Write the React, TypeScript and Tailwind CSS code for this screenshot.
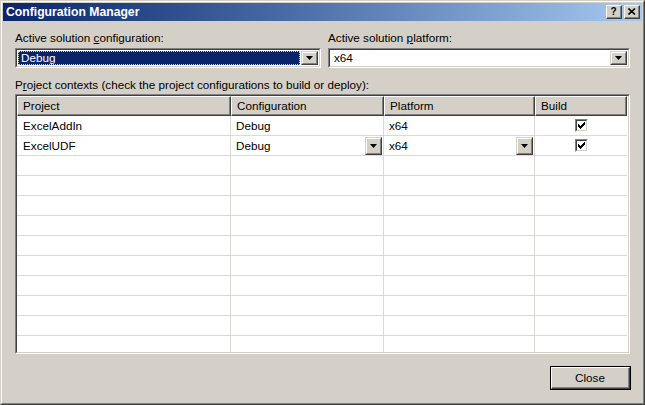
import React from "react";

const font = { fontFamily: '"Liberation Sans", Arial, sans-serif' };

function Arrow() {
  return (
    <svg width="7" height="4" viewBox="0 0 7 4" className="block">
      <path d="M0 0h7L3.5 4z" fill="#000" />
    </svg>
  );
}

function DropBtn({ className = "" }: { className?: string }) {
  return (
    <div className={`flex items-center justify-center bg-[#d4d0c8] border border-t-[#d4d0c8] border-l-[#d4d0c8] border-r-[#404040] border-b-[#404040] ${className}`}>
      <div className="flex-1 self-stretch flex items-center justify-center border border-t-white border-l-white border-r-[#808080] border-b-[#808080]">
        <Arrow />
      </div>
    </div>
  );
}

function Sunken({ children, className = "" }: { children: React.ReactNode; className?: string }) {
  return (
    <div className={`border border-t-[#808080] border-l-[#808080] border-r-white border-b-white ${className}`}>
      <div className="h-full border border-t-[#404040] border-l-[#404040] border-r-[#d4d0c8] border-b-[#d4d0c8] bg-white">
        {children}
      </div>
    </div>
  );
}

function Check() {
  return (
    <div className="w-[13px] h-[13px] border border-t-[#808080] border-l-[#808080] border-r-white border-b-white">
      <div className="w-full h-full border border-t-[#404040] border-l-[#404040] border-r-[#d4d0c8] border-b-[#d4d0c8] bg-white flex items-center justify-center">
        <svg width="7" height="7" viewBox="0 0 7 7" className="block">
          <path d="M0 2h1v1h1v1h1V3h1V2h1V1h1V0h1v3H6v1H5v1H4v1H3v1H2V6H1V5H0z" fill="#000" />
        </svg>
      </div>
    </div>
  );
}

function TitleBtn({ children }: { children: React.ReactNode }) {
  return (
    <div className="w-[16px] h-[14px] bg-[#d4d0c8] border border-t-white border-l-white border-r-[#404040] border-b-[#404040]">
      <div className="w-full h-full border-r border-b border-r-[#808080] border-b-[#808080] flex items-center justify-center">
        {children}
      </div>
    </div>
  );
}

const cols = [214, 153, 151, 92];

function HeaderCell({ text, w }: { text: string; w: number }) {
  return (
    <div style={{ width: w }} className="h-[20px] shrink-0 bg-[#d4d0c8] border border-t-white border-l-white border-r-[#404040] border-b-[#404040]">
      <div className="h-full border-r border-b border-r-[#808080] border-b-[#808080] pl-[5px] flex items-center text-[11.7px] text-black">
        {text}
      </div>
    </div>
  );
}

function Cell({ w, children, last = false }: { w: number; children?: React.ReactNode; last?: boolean }) {
  return (
    <div style={{ width: w }} className={`h-[20px] shrink-0 border-b border-b-[#dcd9d2] ${last ? "" : "border-r border-r-[#dcd9d2]"} flex items-center text-[11.7px] text-black`}>
      {children}
    </div>
  );
}

export default function App() {
  const empty = Array.from({ length: 10 });
  return (
    <div style={font} className="w-[645px] h-[405px] bg-[#d4d0c8] border border-t-[#d4d0c8] border-l-[#d4d0c8] border-r-[#404040] border-b-[#404040] overflow-hidden">
      <div className="h-full border border-t-white border-l-white border-r-[#808080] border-b-[#808080] p-[1px] flex flex-col">
        {/* Title bar */}
        <div className="h-[18px] shrink-0 bg-gradient-to-r from-[#0a246a] to-[#a6caf0] flex items-center pl-[3px] pr-[2px]">
          <span className="text-white font-bold text-[12.2px]">Configuration Manager</span>
          <div className="ml-auto flex items-center">
            <TitleBtn>
              <span className="text-[10px] font-bold leading-none text-black">?</span>
            </TitleBtn>
            <div className="w-[2px]" />
            <TitleBtn>
              <svg width="8" height="7" viewBox="0 0 8 7" className="block">
                <path d="M0.5 0.5L7 6.5M7 0.5L0.5 6.5" stroke="#000" strokeWidth="1.6" />
              </svg>
            </TitleBtn>
          </div>
        </div>

        {/* Body */}
        <div className="flex-1 flex flex-col px-[12px] pt-[10px] text-[11.7px] text-black">
          <div className="flex gap-[7px]">
            <div className="w-[306px] flex flex-col">
              <div className="h-[14px] leading-[14px]">
                Active solution <span className="underline">c</span>onfiguration:
              </div>
              <Sunken className="mt-[3px] h-[20px]">
                <div className="h-full flex items-center p-[1px]">
                  <div className="flex-1 h-full bg-[#0a246a] text-white flex items-center pl-[2px] border border-dotted border-[#d4d0c8]">Debug</div>
                  <DropBtn className="w-[17px] h-full ml-[1px]" />
                </div>
              </Sunken>
            </div>
            <div className="flex-1 flex flex-col">
              <div className="h-[14px] leading-[14px]">
                Active solution <span className="underline">p</span>latform:
              </div>
              <Sunken className="mt-[3px] h-[20px]">
                <div className="h-full flex items-center p-[1px]">
                  <div className="flex-1 h-full flex items-center pl-[3px]">x64</div>
                  <DropBtn className="w-[17px] h-full" />
                </div>
              </Sunken>
            </div>
          </div>

          <div className="mt-[10px] h-[14px] leading-[14px]">
            P<span className="underline">r</span>oject contexts (check the project configurations to build or deploy):
          </div>

          <Sunken className="mt-[2px] h-[260px]">
            <div className="h-full overflow-hidden flex flex-col">
              <div className="flex">
                <HeaderCell text="Project" w={cols[0]} />
                <HeaderCell text="Configuration" w={cols[1]} />
                <HeaderCell text="Platform" w={cols[2]} />
                <HeaderCell text="Build" w={cols[3]} />
              </div>
              <div className="flex">
                <Cell w={cols[0]}><span className="pl-[6px]">ExcelAddIn</span></Cell>
                <Cell w={cols[1]}><span className="pl-[5px]">Debug</span></Cell>
                <Cell w={cols[2]}><span className="pl-[5px]">x64</span></Cell>
                <Cell w={cols[3]} last><div className="w-full flex justify-end pr-[39px]"><Check /></div></Cell>
              </div>
              <div className="flex">
                <Cell w={cols[0]}><span className="pl-[6px]">ExcelUDF</span></Cell>
                <Cell w={cols[1]}>
                  <span className="pl-[5px] flex-1">Debug</span>
                  <DropBtn className="w-[17px] h-[18px] mr-[1px]" />
                </Cell>
                <Cell w={cols[2]}>
                  <span className="pl-[5px] flex-1">x64</span>
                  <DropBtn className="w-[17px] h-[18px] mr-[1px]" />
                </Cell>
                <Cell w={cols[3]} last><div className="w-full flex justify-end pr-[39px]"><Check /></div></Cell>
              </div>
              {empty.map((_, i) => (
                <div className="flex" key={i}>
                  <Cell w={cols[0]} />
                  <Cell w={cols[1]} />
                  <Cell w={cols[2]} />
                  <Cell w={cols[3]} last />
                </div>
              ))}
            </div>
          </Sunken>

          <div className="flex justify-end mt-[12px]">
            <div className="w-[81px] h-[24px] border border-black mr-[-1px]">
              <div className="h-full border border-t-white border-l-white border-r-[#404040] border-b-[#404040]">
                <div className="h-full border-r border-b border-r-[#808080] border-b-[#808080] flex items-center justify-center text-[11.7px]">
                  Close
                </div>
              </div>
            </div>
          </div>
        </div>
      </div>
    </div>
  );
}
